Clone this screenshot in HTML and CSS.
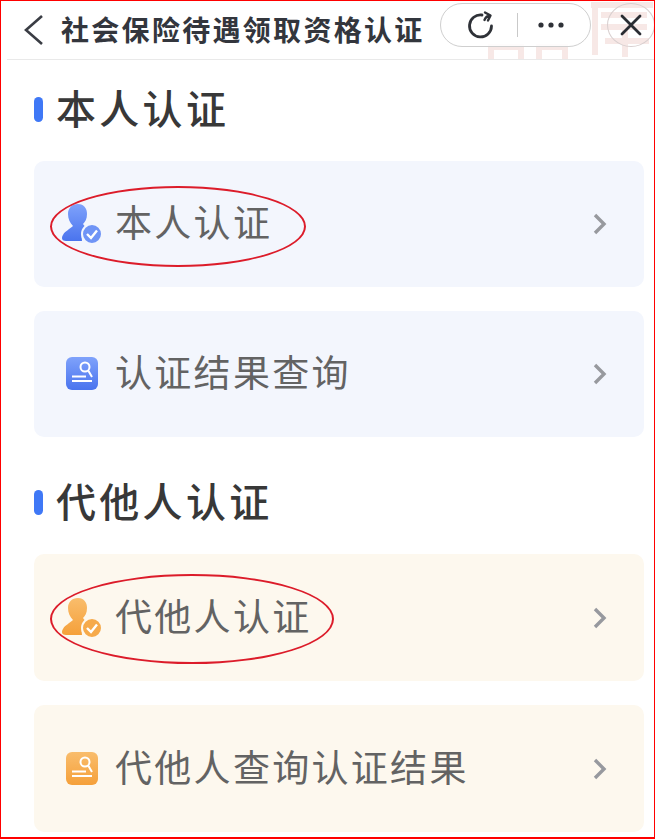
FILE: index.html
```html
<!DOCTYPE html>
<html lang="zh-CN">
<head>
  <meta charset="UTF-8">
  <meta name="viewport" content="width=device-width, initial-scale=1">
  <title>社会保险待遇领取资格认证</title>
  <link rel="stylesheet" href="styles.css">
</head>
<body>
  <svg width="0" height="0" class="defs">
    <defs>
      <linearGradient id="blueGrad" x1="0" y1="0" x2="0" y2="1">
        <stop offset="0" stop-color="#7fa2fb"/><stop offset="1" stop-color="#4a74ee"/>
      </linearGradient>
      <linearGradient id="orangeGrad" x1="0" y1="0" x2="0" y2="1">
        <stop offset="0" stop-color="#f9bd6c"/><stop offset="1" stop-color="#f5a03a"/>
      </linearGradient>
    </defs>
  </svg>
  <div class="frame">
    <div class="header">
      <svg class="seal" width="175" height="58" viewBox="0 0 175 58">
        <g fill="none" stroke="#d98f88" stroke-width="6">
          <path d="M12 58V46h30v12M60 58V46h26v12"/>
          <path d="M112 4h62M122 14h46M122 26h46M116 4v50M126 40h44M146 26v30"/>
        </g>
      </svg>
      <svg class="back" width="22" height="32" viewBox="0 0 22 32">
        <path d="M20 2 L4 16 L20 30" fill="none" stroke="#3a3d44" stroke-width="2.600"/>
      </svg>
      <h1>社会保险待遇领取资格认证</h1>
      <div class="capsule">
        <svg width="32" height="32" viewBox="0 0 32 32">
          <path d="M17 6A11 11 0 1 0 26.500 17" fill="none" stroke="#2f3238" stroke-width="2.800" stroke-linecap="round"/>
          <path d="M19.500 11 Q21 7 25 6.500 M20 3.500 L25.500 6.500 L23 11.500" fill="none" stroke="#2f3238" stroke-width="2.400" stroke-linecap="round" stroke-linejoin="round"/>
        </svg>
        <span class="capsule-sep"></span>
        <svg width="26" height="6" viewBox="0 0 26 6">
          <circle cx="3" cy="3" r="2.600" fill="#2f3238"/><circle cx="13" cy="3" r="2.600" fill="#2f3238"/><circle cx="23" cy="3" r="2.600" fill="#2f3238"/>
        </svg>
      </div>
      <div class="close">
        <svg width="22" height="22" viewBox="0 0 22 22">
          <path d="M2 2 L20 20 M20 2 L2 20" stroke="#2a2d33" stroke-width="2.800" stroke-linecap="round"/>
        </svg>
      </div>
    </div>

    <div class="content">
      <div class="section-title section-first"><span class="tick"></span><h2>本人认证</h2></div>

      <div class="card card-blue">
        <svg class="icon" width="44" height="44" viewBox="0 0 44 44">
          <path d="M18 2c6 0 9 4.500 9 10 0 5-2 8-4 10 1 2 3 3 5 4a11 11 0 0 0-6 13H6c-4 0-5-3-3-6 2-4 7-6 10-9-3-3-5-7-5-12C8 6 12 2 18 2z" fill="url(#blueGrad)"/>
          <circle cx="32" cy="32" r="10" fill="#6f94f6" stroke="#f3f6fd" stroke-width="2"/>
          <path d="M27 32 L31 36 L37 28.500" fill="none" stroke="#fff" stroke-width="2.400"/>
        </svg>
        <span class="card-text">本人认证</span>
        <svg class="arrow" width="14" height="22" viewBox="0 0 14 22"><path d="M2 2 L11 11 L2 20" fill="none" stroke="#97999e" stroke-width="3.400"/></svg>
      </div>

      <div class="card card-blue">
        <svg class="icon" width="44" height="44" viewBox="0 0 44 44">
          <rect x="6" y="5" width="32" height="33" rx="6" fill="url(#blueGrad)"/>
          <circle cx="25" cy="15" r="4.500" fill="none" stroke="#fff" stroke-width="2"/>
          <path d="M28.500 19 L32 25 M12 24.500H26 M12 29H32" stroke="#fff" stroke-width="2" fill="none"/>
        </svg>
        <span class="card-text">认证结果查询</span>
        <svg class="arrow" width="14" height="22" viewBox="0 0 14 22"><path d="M2 2 L11 11 L2 20" fill="none" stroke="#97999e" stroke-width="3.400"/></svg>
      </div>

      <div class="section-title"><span class="tick"></span><h2>代他人认证</h2></div>

      <div class="card card-orange">
        <svg class="icon" width="44" height="44" viewBox="0 0 44 44">
          <path d="M18 2c6 0 9 4.500 9 10 0 5-2 8-4 10 1 2 3 3 5 4a11 11 0 0 0-6 13H6c-4 0-5-3-3-6 2-4 7-6 10-9-3-3-5-7-5-12C8 6 12 2 18 2z" fill="url(#orangeGrad)"/>
          <circle cx="32" cy="32" r="10" fill="#f6aa4b" stroke="#fdf8ef" stroke-width="2"/>
          <path d="M27 32 L31 36 L37 28.500" fill="none" stroke="#fff" stroke-width="2.400"/>
        </svg>
        <span class="card-text">代他人认证</span>
        <svg class="arrow" width="14" height="22" viewBox="0 0 14 22"><path d="M2 2 L11 11 L2 20" fill="none" stroke="#97999e" stroke-width="3.400"/></svg>
      </div>

      <div class="card card-orange">
        <svg class="icon" width="44" height="44" viewBox="0 0 44 44">
          <rect x="6" y="5" width="32" height="33" rx="6" fill="url(#orangeGrad)"/>
          <circle cx="25" cy="15" r="4.500" fill="none" stroke="#fff" stroke-width="2"/>
          <path d="M28.500 19 L32 25 M12 24.500H26 M12 29H32" stroke="#fff" stroke-width="2" fill="none"/>
        </svg>
        <span class="card-text">代他人查询认证结果</span>
        <svg class="arrow" width="14" height="22" viewBox="0 0 14 22"><path d="M2 2 L11 11 L2 20" fill="none" stroke="#97999e" stroke-width="3.400"/></svg>
      </div>
    </div>

    <div class="ring ring-first"></div>
    <div class="ring ring-second"></div>
  </div>
</body>
</html>
```

FILE: styles.css
```css
html, body {
  margin: 0;
  height: 100%;
}
body {
  font-family: "Noto Sans CJK SC", "Noto Sans", sans-serif;
  background: #FFFFFF;
  overflow: hidden;
}
.defs {
  position: absolute;
}
.frame {
  position: relative;
  height: 839px;
  box-sizing: border-box;
  border: 1px solid #FF0000;
  border-width: 1px 1px 2px 1px;
  overflow: hidden;
}
.header {
  position: relative;
  display: flex;
  align-items: center;
  height: 58px;
  margin-left: 6px;
  border-bottom: 1px solid #E9E9E9;
  overflow: hidden;
}
.seal {
  position: absolute;
  right: 0;
  top: 0;
  opacity: 0.2;
}
.back {
  position: relative;
  margin-left: 15px;
}
.header h1 {
  position: relative;
  margin: -3px 0 0 17px;
  font-size: 28px;
  font-weight: 700;
  letter-spacing: 2.300px;
  color: #33363D;
  white-space: nowrap;
  line-height: 1;
}
.capsule {
  position: absolute;
  left: 433px;
  top: 2px;
  width: 151px;
  height: 44px;
  display: flex;
  align-items: center;
  box-sizing: border-box;
  padding-left: 24px;
  background: rgba(255, 255, 255, 0.85);
  border: 1px solid #CFCFCF;
  border-radius: 22px;
}
.capsule-sep {
  width: 1px;
  height: 24px;
  margin: 0 20px 0 20px;
  background: #C9C9C9;
}
.close {
  position: absolute;
  left: 600px;
  top: 2px;
  width: 48px;
  height: 44px;
  display: flex;
  align-items: center;
  justify-content: center;
  box-sizing: border-box;
  border: 1px solid #D8CFCF;
  border-radius: 50%;
}
.content {
  padding: 0 10px 0 33px;
}
.section-title {
  display: flex;
  align-items: center;
  height: 50px;
  margin: 40px 0 27px;
}
.section-first {
  margin-top: 24px;
}
.section-title h2 {
  margin: -4px 0 0;
  font-size: 40px;
  font-weight: 500;
  letter-spacing: 3.300px;
  color: #383838;
  line-height: 1;
}
.tick {
  width: 9px;
  height: 25px;
  margin-right: 13px;
  border-radius: 5px;
  background: #3F78F6;
}
.card {
  display: flex;
  align-items: center;
  height: 126px;
  margin-bottom: 24px;
  padding: 0 37px 0 26px;
  border-radius: 10px;
}
.card-blue {
  background: #F3F6FD;
}
.card-orange {
  height: 127px;
  background: #FDF8EE;
}
.icon {
  flex: none;
  margin-right: 11px;
}
.card-text {
  flex: 1;
  margin-top: -5px;
  font-size: 37px;
  letter-spacing: 2.300px;
  color: #636363;
  line-height: 1;
}
.arrow {
  flex: none;
}
.ring {
  position: absolute;
  box-sizing: border-box;
  border: 2.500px solid #DC1C2A;
  border-radius: 50%;
}
.ring-first {
  left: 49px;
  top: 185px;
  width: 256px;
  height: 81px;
}
.ring-second {
  left: 49px;
  top: 573px;
  width: 284px;
  height: 90px;
}
```
